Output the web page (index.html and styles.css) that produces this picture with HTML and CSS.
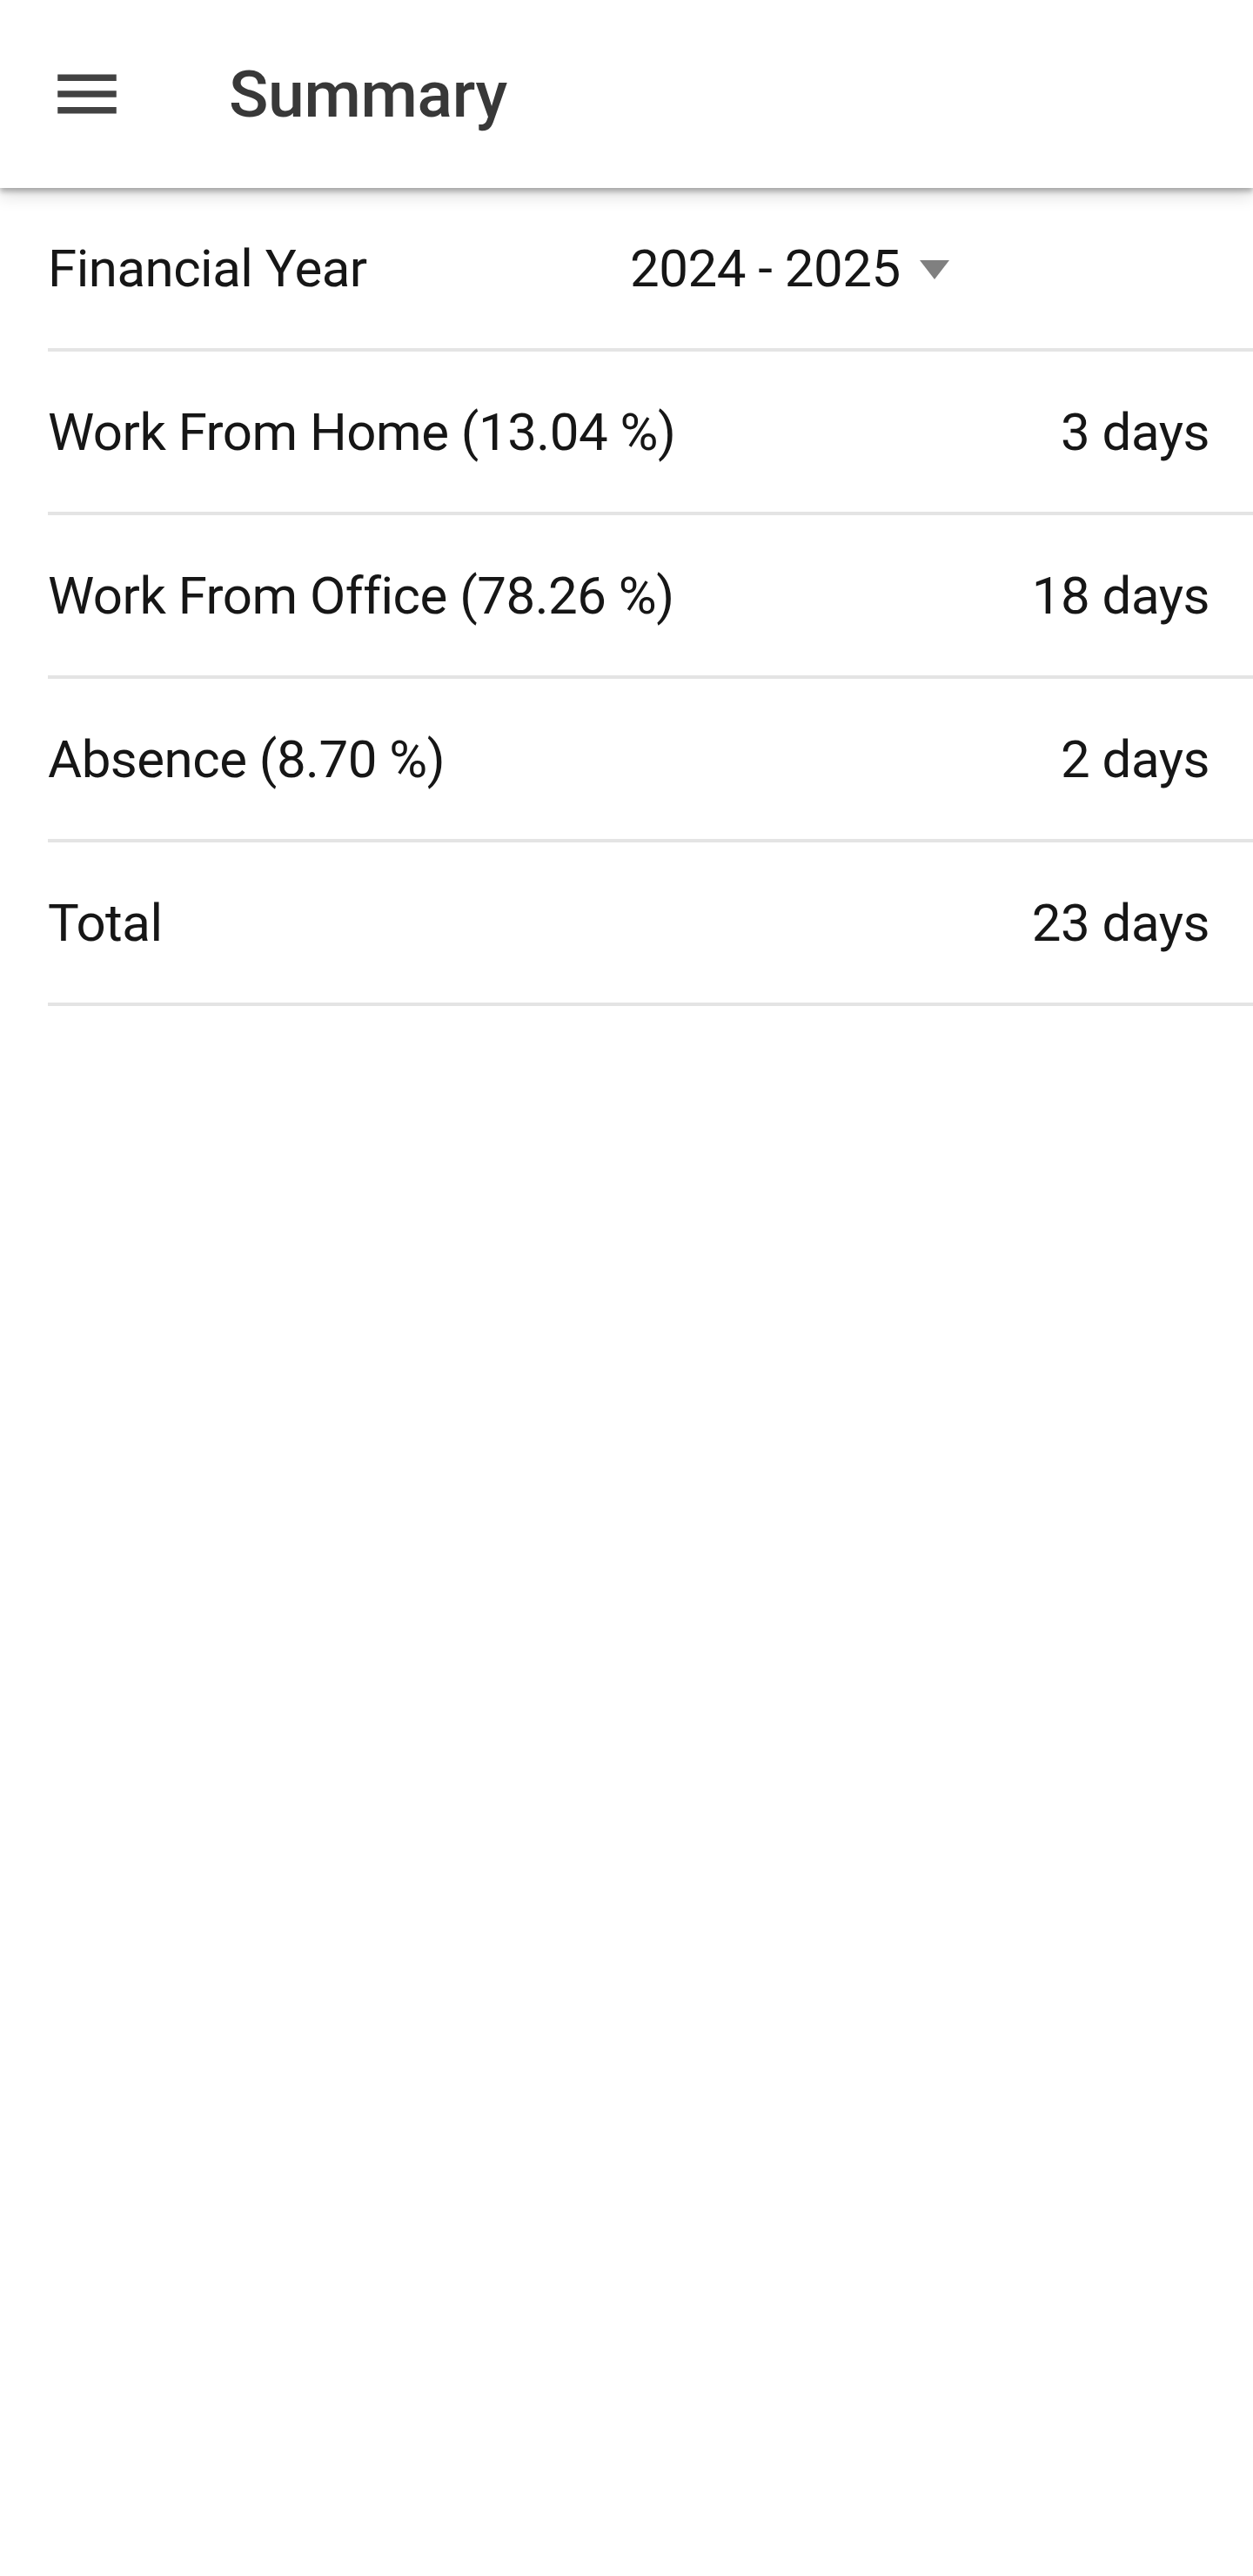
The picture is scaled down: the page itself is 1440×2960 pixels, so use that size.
FILE: index.html
```html
<!DOCTYPE html>
<html lang="en">
<head>
<meta charset="utf-8">
<title>Summary</title>
<link rel="stylesheet" href="styles.css">
</head>
<body>
<header class="appbar">
  <button class="nav-btn" aria-label="Menu">
    <svg viewBox="0 0 24 24" width="90" height="90"><path d="M3 18h18v-2H3v2zm0-5h18v-2H3v2zm0-7v2h18V6H3z" fill="currentColor"/></svg>
  </button>
  <h1 class="title">Summary</h1>
</header>
<main class="list">
  <div class="row row-year">
    <span class="label">Financial Year</span>
    <span class="spinner">2024 - 2025<span class="caret"></span></span>
  </div>
  <div class="row">
    <span class="label">Work From Home (13.04 %)</span>
    <span class="value">3 days</span>
  </div>
  <div class="row">
    <span class="label">Work From Office (78.26 %)</span>
    <span class="value">18 days</span>
  </div>
  <div class="row">
    <span class="label">Absence (8.70 %)</span>
    <span class="value">2 days</span>
  </div>
  <div class="row">
    <span class="label">Total</span>
    <span class="value">23 days</span>
  </div>
</main>
</body>
</html>
```
FILE: styles.css
```css
html, body {
  margin: 0;
  padding: 0;
  background: #ffffff;
}
body {
  width: 1440px;
  min-height: 2960px;
  font-family: Roboto, "Liberation Sans", sans-serif;
  color: #161616;
}
.appbar {
  height: 216px;
  display: flex;
  align-items: center;
  background: #ffffff;
  box-shadow: 0 4px 6px rgba(0,0,0,0.28), 0 10px 18px rgba(0,0,0,0.12);
  position: relative;
  z-index: 1;
}
.nav-btn {
  margin-left: 55px;
  width: 90px;
  height: 90px;
  padding: 0;
  border: 0;
  background: transparent;
  color: #424242;
  display: flex;
}
.title {
  margin: 0 0 0 118px;
  font-size: 75px;
  font-weight: 500;
  color: #383838;
  letter-spacing: -0.3px;
}
.list {
  display: flex;
  flex-direction: column;
}
.row {
  box-sizing: border-box;
  height: 188px;
  margin-left: 55px;
  padding-right: 50px;
  display: flex;
  align-items: center;
  justify-content: space-between;
  border-bottom: 4px solid #e4e4e4;
  font-size: 60px;
  letter-spacing: -0.5px;
}
.row-year {
  justify-content: flex-start;
}
.row-year .label {
  width: 669px;
}
.spinner {
  display: inline-flex;
  align-items: center;
}
.caret {
  width: 0;
  height: 0;
  margin-left: 22px;
  margin-top: 4px;
  border-left: 17px solid transparent;
  border-right: 17px solid transparent;
  border-top: 22px solid #808080;
}
```
